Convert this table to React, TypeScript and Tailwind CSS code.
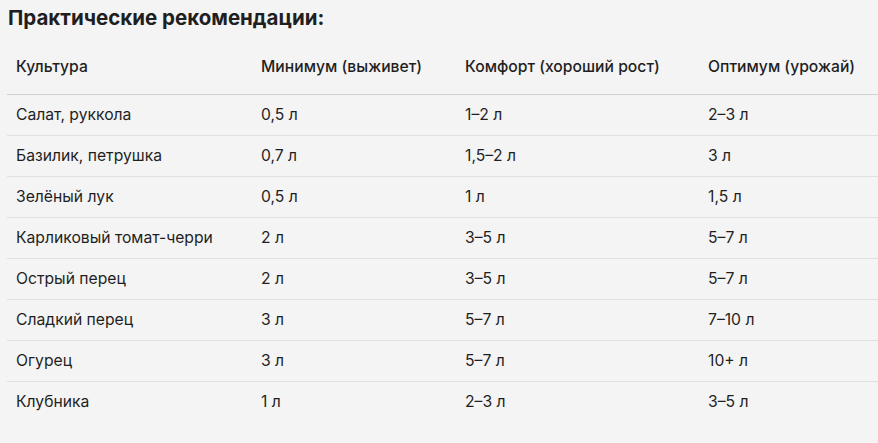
const rows: [string, string, string, string][] = [
  ["Салат, руккола", "0,5 л", "1–2 л", "2–3 л"],
  ["Базилик, петрушка", "0,7 л", "1,5–2 л", "3 л"],
  ["Зелёный лук", "0,5 л", "1 л", "1,5 л"],
  ["Карликовый томат-черри", "2 л", "3–5 л", "5–7 л"],
  ["Острый перец", "2 л", "3–5 л", "5–7 л"],
  ["Сладкий перец", "3 л", "5–7 л", "7–10 л"],
  ["Огурец", "3 л", "5–7 л", "10+ л"],
  ["Клубника", "1 л", "2–3 л", "3–5 л"],
];

const widths = ["w-[245px]", "w-[204px]", "w-[243px]", "w-[200px]"];

export default function App() {
  return (
    <div className="w-[878px] h-[443px] overflow-hidden bg-[#f4f4f4] text-[#1f1f1f] font-['Inter','Noto_Sans',sans-serif]">
      <h2 className="pl-[8px] pt-[4px] text-[20.5px] font-bold leading-[28px]">Практические рекомендации:</h2>
      <table className="ml-[7px] mt-[8px] w-[892px] table-fixed border-collapse text-[15.7px]">
        <thead>
          <tr className="border-b border-[#cfcfcf]">
            {["Культура", "Минимум (выживет)", "Комфорт (хороший рост)", "Оптимум (урожай)"].map((h, i) => (
              <th key={h} className={`${widths[i]} h-[54px] pl-[9px] text-left font-medium align-middle whitespace-nowrap`}>{h}</th>
            ))}
          </tr>
        </thead>
        <tbody>
          {rows.map((r, ri) => (
            <tr key={r[0]} className={ri < rows.length - 1 ? "border-b border-[#e0e0e0]" : ""}>
              {r.map((c, i) => (
                <td key={i} className={`${widths[i]} h-[41px] pl-[9px] align-middle whitespace-nowrap`}>{c}</td>
              ))}
            </tr>
          ))}
        </tbody>
      </table>
    </div>
  );
}
